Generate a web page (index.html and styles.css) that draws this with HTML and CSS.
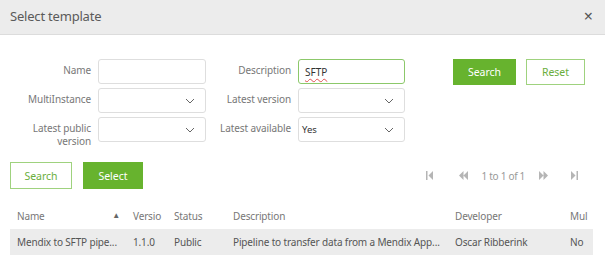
FILE: index.html
```html
<!DOCTYPE html>
<html>
<head>
<meta charset="utf-8">
<link rel="stylesheet" href="styles.css">
</head>
<body>
<div class="dialog">
  <div class="header">
    <span class="title">Select template</span>
    <span class="close">×</span>
  </div>
  <div class="form">
    <label class="lbl">Name</label>
    <div class="inp"></div>
    <label class="lbl">Description</label>
    <div class="inp active"><span class="spell">SFTP</span></div>
    <div class="topbtns">
      <button class="btn primary w63">Search</button>
      <button class="btn outline w59">Reset</button>
    </div>

    <label class="lbl">MultiInstance</label>
    <div class="sel"><span></span><svg class="chev" width="10" height="6" viewBox="0 0 10 6"><path d="M1 1 L5 5 L9 1" fill="none" stroke="#666" stroke-width="1"/></svg></div>
    <label class="lbl">Latest version</label>
    <div class="sel"><span></span><svg class="chev" width="10" height="6" viewBox="0 0 10 6"><path d="M1 1 L5 5 L9 1" fill="none" stroke="#666" stroke-width="1"/></svg></div>
    <div></div>

    <label class="lbl">Latest public version</label>
    <div class="sel"><span></span><svg class="chev" width="10" height="6" viewBox="0 0 10 6"><path d="M1 1 L5 5 L9 1" fill="none" stroke="#666" stroke-width="1"/></svg></div>
    <label class="lbl">Latest available</label>
    <div class="sel"><span class="val">Yes</span><svg class="chev" width="10" height="6" viewBox="0 0 10 6"><path d="M1 1 L5 5 L9 1" fill="none" stroke="#666" stroke-width="1"/></svg></div>
    <div></div>
  </div>

  <div class="actions">
    <div class="left">
      <button class="btn outline w62 h27">Search</button>
      <button class="btn primary w60 h27">Select</button>
    </div>
    <div class="pager">
      <svg class="pg first" width="7" height="9" viewBox="0 0 7 9"><rect x="0" y="0" width="1.5" height="9" fill="#b5b5b5"/><path d="M7 0 L2.5 4.5 L7 9 Z" fill="#b5b5b5"/></svg>
      <svg class="pg prev" width="9" height="9" viewBox="0 0 9 9"><path d="M4.5 0 L0 4.5 L4.5 9 Z M9 0 L4.5 4.5 L9 9 Z" fill="#b5b5b5"/></svg>
      <span class="pgtext">1 to 1 of 1</span>
      <svg class="pg next" width="9" height="9" viewBox="0 0 9 9"><path d="M0 0 L4.5 4.5 L0 9 Z M4.5 0 L9 4.5 L4.5 9 Z" fill="#b5b5b5"/></svg>
      <svg class="pg last" width="7" height="9" viewBox="0 0 7 9"><path d="M0 0 L4.5 4.5 L0 9 Z" fill="#b5b5b5"/><rect x="5.5" y="0" width="1.5" height="9" fill="#b5b5b5"/></svg>
    </div>
  </div>

  <div class="table">
    <div class="tr thead">
      <div class="c c-name">Name <span class="arrow">▲</span></div>
      <div class="c c-ver">Versio</div>
      <div class="c c-status">Status</div>
      <div class="c c-desc">Description</div>
      <div class="c c-dev">Developer</div>
      <div class="c c-mul">Mul</div>
    </div>
    <div class="tr row">
      <div class="c c-name">Mendix to SFTP pipe...</div>
      <div class="c c-ver">1.1.0</div>
      <div class="c c-status">Public</div>
      <div class="c c-desc">Pipeline to transfer data from a Mendix App...</div>
      <div class="c c-dev">Oscar Ribberink</div>
      <div class="c c-mul">No</div>
    </div>
  </div>
</div>
</body>
</html>
```

FILE: styles.css
```css
* { box-sizing: border-box; }
html, body { margin: 0; padding: 0; background: #fff; }
body {
  font-family: "Noto Sans", "Open Sans", sans-serif;
  font-size: 10px;
  color: #555;
  width: 605px;
  height: 269px;
  overflow: hidden;
}
.header {
  height: 35px;
  background: #ececec;
  border-bottom: 1px solid #dcdcdc;
  display: flex;
  align-items: center;
  justify-content: space-between;
  padding: 0 12px 2px 10px;
}
.title { font-size: 13px; color: #5a5a5a; letter-spacing: -0.2px; }
.close { font-size: 16px; color: #555; line-height: 1; }

.form {
  display: grid;
  grid-template-columns: 91px 108px 78px 107px 1fr;
  column-gap: 7px;
  row-gap: 4px;
  padding: 24px 0 0 0;
  grid-auto-rows: 25px;
}
.lbl {
  text-align: right;
  color: #777;
  line-height: 13px;
  padding-top: 5px;
  font-size: 10px;
  letter-spacing: -0.1px;
}
.inp, .sel {
  height: 25px;
  border: 1px solid #dedede;
  border-radius: 3px;
  background: #fff;
  font-size: 10px;
  width: 100%;
}
.inp {
  display: flex;
  align-items: center;
  padding: 0 6px;
}
.inp.active {
  border-color: #8cc86a;
  color: #333;
}
.spell {
  text-decoration: underline wavy #e05050;
  text-decoration-thickness: 1px;
  text-underline-offset: 2px;
  text-decoration-skip-ink: none;
}
.sel {
  display: flex;
  align-items: center;
  justify-content: space-between;
  padding: 0 10px 0 3px;
}
.sel .val { color: #333; font-size: 9.5px; }
.chev { display: block; }
.topbtns {
  display: flex;
  gap: 10px;
  padding-left: 41px;
  align-items: flex-start;
}
.btn {
  font-family: inherit;
  font-size: 10.5px;
  height: 26px;
  border-radius: 0;
  padding: 0;
  margin: 0;
  cursor: pointer;
}
.primary {
  background: #67b32e;
  border: 1px solid #67b32e;
  color: #fff;
}
.outline {
  background: #fff;
  border: 1px solid #9fd27e;
  color: #6aae3c;
}
.w63 { width: 63px; }
.w59 { width: 59px; }
.w62 { width: 62px; }
.w60 { width: 60px; }
.h27 { height: 27px; }

.actions {
  display: flex;
  justify-content: space-between;
  align-items: center;
  padding: 0 0 0 10px;
  margin-top: 20px;
}
.left { display: flex; gap: 11px; }
.pager {
  display: flex;
  align-items: center;
  padding-right: 27px;
}
.pg { display: block; }
.first { margin-right: 26px; }
.prev { margin-right: 14px; }
.pgtext { color: #999; font-size: 10px; margin-right: 14px; letter-spacing: -0.3px; }
.next { margin-right: 23px; }

.table {
  margin: 14px 12px 0 10px;
}
.tr {
  display: grid;
  grid-template-columns: 116px 41px 59px 222px 115px 30px;
  align-items: center;
  white-space: nowrap;
}
.thead { height: 26px; color: #777; }
.row { height: 26px; background: #ececec; color: #555; }
.c { padding-left: 7px; overflow: hidden; font-size: 10px; letter-spacing: -0.15px; }
.c-name { display: flex; justify-content: space-between; padding-right: 6px; }
.arrow { font-size: 8px; color: #666; }
```
